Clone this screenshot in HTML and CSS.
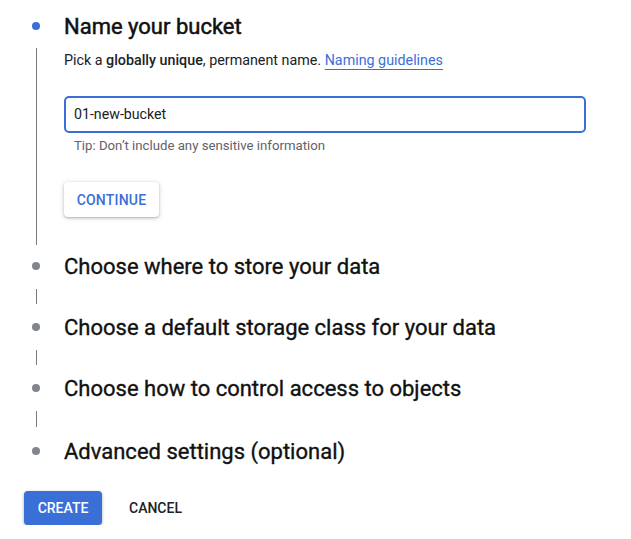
FILE: index.html
```html
<!DOCTYPE html>
<html>
<head>
<meta charset="utf-8">
<link rel="stylesheet" href="styles.css">
</head>
<body>
<div class="page">
  <div class="step">
    <div class="step-head">
      <div class="rail"><span class="dot dot-active"></span></div>
      <div class="title title-active">Name your bucket</div>
    </div>
    <div class="step-body">
      <div class="rail"><span class="line line-long"></span></div>
      <div class="content">
        <p class="desc">Pick a <b>globally unique</b>, permanent name. <a class="link" href="#">Naming guidelines</a></p>
        <div class="field">01-new-bucket</div>
        <p class="tip">Tip: Don’t include any sensitive information</p>
        <button class="btn-continue">CONTINUE</button>
      </div>
    </div>
  </div>

  <div class="step">
    <div class="step-head">
      <div class="rail"><span class="dot"></span></div>
      <div class="title">Choose where to store your data</div>
    </div>
    <div class="connector"><span class="line"></span></div>
  </div>

  <div class="step">
    <div class="step-head">
      <div class="rail"><span class="dot"></span></div>
      <div class="title">Choose a default storage class for your data</div>
    </div>
    <div class="connector"><span class="line"></span></div>
  </div>

  <div class="step">
    <div class="step-head">
      <div class="rail"><span class="dot"></span></div>
      <div class="title">Choose how to control access to objects</div>
    </div>
    <div class="connector connector-last"><span class="line"></span></div>
  </div>

  <div class="step">
    <div class="step-head">
      <div class="rail"><span class="dot"></span></div>
      <div class="title">Advanced settings (optional)</div>
    </div>
  </div>

  <div class="actions">
    <button class="btn-create">CREATE</button>
    <button class="btn-cancel">CANCEL</button>
  </div>
</div>
</body>
</html>
```

FILE: styles.css
```css
html, body {
  margin: 0;
  padding: 0;
  background: #ffffff;
}
body {
  font-family: Roboto, "Liberation Sans", Arial, sans-serif;
  color: #202124;
}
.page {
  padding-top: 10px;
  width: 631px;
}
.step-head {
  display: grid;
  grid-template-columns: 64px 1fr;
  height: 32px;
  align-items: center;
}
.rail {
  height: 100%;
}
.dot {
  display: block;
  width: 8px;
  height: 8px;
  border-radius: 50%;
  background: #80868b;
  margin-left: 32px;
  margin-top: 12px;
}
.dot-active {
  background: #3a6fd8;
}
.title {
  font-size: 22px;
  line-height: 34px;
  font-weight: 400;
  color: #111;
  white-space: nowrap;
  -webkit-text-stroke: 0.35px #111;
}
.title-active {
  -webkit-text-stroke: 0.5px #111;
}
.step-body {
  display: grid;
  grid-template-columns: 64px 1fr;
  height: 208px;
}
.line {
  display: block;
  width: 1px;
  background: #7a7a7a;
  margin-left: 36px;
}
.line-long {
  margin-top: 6px;
  height: 197px;
}
.connector {
  padding: 7px 0;
}
.connector .line {
  height: 15px;
}
.connector-last {
  padding: 7px 0 8px;
}
.connector-last .line {
  height: 16px;
}
.content {
  padding-top: 8px;
  width: 522px;
}
.desc {
  margin: 0;
  font-size: 14.3px;
  line-height: 20px;
  color: #202124;
}
.desc b {
  font-weight: 500;
}
.link {
  color: #3a6fd8;
  text-decoration: underline;
  text-underline-offset: 4px;
  text-decoration-thickness: 1px;
}
.field {
  margin-top: 26px;
  height: 37px;
  box-sizing: border-box;
  border: 2px solid #3a6fd8;
  border-radius: 5px;
  padding: 0 8px;
  font-size: 14.2px;
  line-height: 33px;
  color: #202124;
}
.tip {
  margin: 5px 0 0;
  padding-left: 10px;
  font-size: 13.2px;
  line-height: 16px;
  color: #5f6368;
}
.btn-continue {
  margin-top: 28px;
  height: 35px;
  width: 95px;
  border: none;
  border-radius: 4px;
  background: #fff;
  box-shadow: 0 1px 2px rgba(60,64,67,0.3), 0 1px 4px 1px rgba(60,64,67,0.15);
  font-family: Roboto, "Liberation Sans", Arial, sans-serif;
  font-size: 14px;
  font-weight: 500;
  color: #3a6fd8;
  letter-spacing: 0.2px;
  padding: 0;
}
.actions {
  display: flex;
  align-items: center;
  margin-top: 24px;
  padding-left: 24px;
  gap: 9px;
}
.btn-create {
  height: 34px;
  width: 78px;
  border: none;
  border-radius: 4px;
  background: #3a6fd8;
  color: #fff;
  font-family: Roboto, "Liberation Sans", Arial, sans-serif;
  font-size: 14px;
  font-weight: 500;
  box-shadow: 0 1px 2px rgba(60,64,67,0.3), 0 1px 3px 1px rgba(60,64,67,0.15);
  padding: 0;
}
.btn-cancel {
  height: 34px;
  border: none;
  background: transparent;
  color: #202124;
  font-family: Roboto, "Liberation Sans", Arial, sans-serif;
  font-size: 14px;
  font-weight: 500;
  padding: 0 18px;
}
```
